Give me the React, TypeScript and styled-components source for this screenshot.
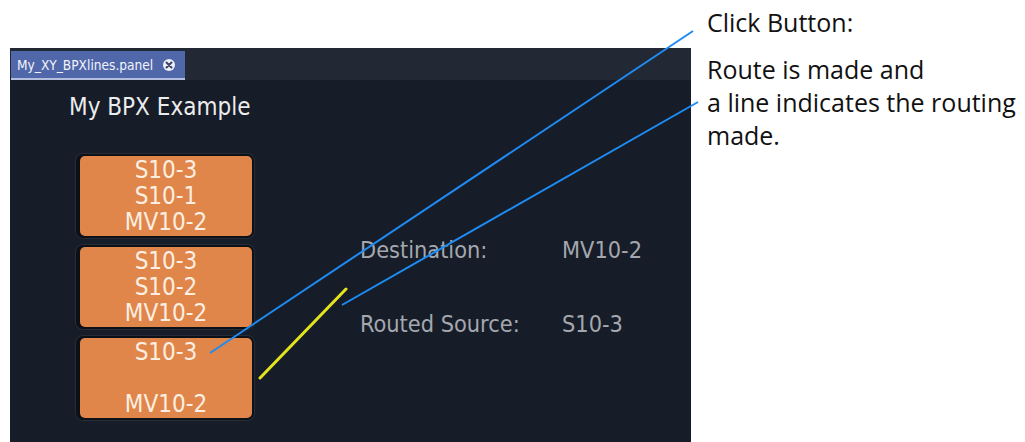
import React from "react";
import styled, { createGlobalStyle } from "styled-components";

const Global = createGlobalStyle`
  html, body { margin: 0; padding: 0; background: #ffffff; }
  body { width: 1025px; height: 442px; overflow: hidden; }
`;

const Page = styled.div`
  position: relative;
  width: 1025px;
  height: 442px;
  display: flex;
  align-items: flex-start;
`;

const Panel = styled.div`
  margin: 48px 0 0 10px;
  width: 681px;
  height: 394px;
  display: flex;
  flex-direction: column;
  background: #161c28;
`;

const TabBar = styled.div`
  height: 32px;
  box-sizing: border-box;
  padding: 3px 0 0 1px;
  background: #222834;
  display: flex;
  align-items: flex-start;
`;

const Tab = styled.div`
  height: 29px;
  box-sizing: border-box;
  padding: 0 10px 0 6px;
  background: #5067aa;
  border-bottom: 2px solid #b4bedf;
  display: flex;
  align-items: center;
  gap: 10px;
  font-family: "DejaVu Sans Condensed", "DejaVu Sans", sans-serif;
  font-stretch: condensed;
  font-size: 13.6px;
  color: #f2f4fa;
  white-space: nowrap;
`;

const CloseDot = styled.span`
  width: 12px;
  height: 12px;
  border-radius: 50%;
  background: #eef0f6;
  display: flex;
  align-items: center;
  justify-content: center;
`;

const Body = styled.div`
  flex: 1;
  display: flex;
  align-items: flex-start;
  font-family: "DejaVu Sans Condensed", "DejaVu Sans", sans-serif;
  font-stretch: condensed;
`;

const LeftCol = styled.div`
  width: 244px;
  display: flex;
  flex-direction: column;
`;

const Title = styled.div`
  margin: 13px 0 0 59px;
  font-size: 24px;
  line-height: 28px;
  color: #ececec;
  white-space: nowrap;
`;

const Stack = styled.div`
  margin: 33px 0 0 66px;
  display: flex;
  flex-direction: column;
  gap: 7px;
`;

const Btn = styled.div`
  width: 178px;
  height: 84px;
  box-sizing: border-box;
  padding: 2px 2px 2px 4px;
  border-radius: 7px;
  background: #0c1017;
  box-shadow: 0 0 0 1px #262c38;
  display: flex;
`;

const BtnFace = styled.div`
  flex: 1;
  border-radius: 5px;
  background: #e0864a;
  display: flex;
  flex-direction: column;
  align-items: center;
  justify-content: center;
  font-size: 24px;
  line-height: 26px;
  color: #fcefe2;
`;

const BtnLine = styled.div`
  height: 26px;
  white-space: nowrap;
`;

const Yellow = styled.svg`
  margin: 207px 0 0 4px;
  flex: none;
`;

const Info = styled.div`
  margin: 157px 0 0 10px;
  display: grid;
  grid-template-columns: 202px auto;
  row-gap: 48px;
  font-size: 23.3px;
  line-height: 26px;
  color: #a4a8ae;
  white-space: nowrap;
`;

const Notes = styled.div`
  margin-left: 16px;
  padding-top: 6px;
  font-family: "Open Sans", sans-serif;
  font-size: 25px;
  line-height: 33px;
  color: #111111;
  white-space: nowrap;
`;

const Para = styled.p<{ $gap?: number }>`
  margin: ${(p) => p.$gap ?? 0}px 0 0 0;
`;

const Overlay = styled.svg`
  position: absolute;
  left: 0;
  top: 0;
  pointer-events: none;
`;

const buttons: string[][] = [
  ["S10-3", "S10-1", "MV10-2"],
  ["S10-3", "S10-2", "MV10-2"],
  ["S10-3", "", "MV10-2"],
];

export default function App() {
  return (
    <>
      <Global />
      <Page>
        <Panel>
          <TabBar>
            <Tab>
              My_XY_BPXlines.panel
              <CloseDot>
                <svg width="8" height="8" viewBox="0 0 8 8">
                  <path d="M1.5 1.5 L6.5 6.5 M6.5 1.5 L1.5 6.5" stroke="#3a4668" strokeWidth="2" strokeLinecap="round" />
                </svg>
              </CloseDot>
            </Tab>
          </TabBar>
          <Body>
            <LeftCol>
              <Title>My BPX Example</Title>
              <Stack>
                {buttons.map((lines, i) => (
                  <Btn key={i}>
                    <BtnFace>
                      {lines.map((l, j) => (
                        <BtnLine key={j}>{l || "\u00a0"}</BtnLine>
                      ))}
                    </BtnFace>
                  </Btn>
                ))}
              </Stack>
            </LeftCol>
            <Yellow width="92" height="95" viewBox="0 0 92 95">
              <line x1="2" y1="91" x2="88" y2="2" stroke="#e4e41c" strokeWidth="3" strokeLinecap="round" />
            </Yellow>
            <Info>
              <span>Destination:</span>
              <span>MV10-2</span>
              <span>Routed Source:</span>
              <span>S10-3</span>
            </Info>
          </Body>
        </Panel>
        <Notes>
          <Para>Click Button:</Para>
          <Para $gap={14}>
            Route is made and
            <br />
            a line indicates the routing
            <br />
            made.
          </Para>
        </Notes>
        <Overlay width="1025" height="442" viewBox="0 0 1025 442">
          <line x1="210" y1="353" x2="693" y2="31" stroke="#1e8cf5" strokeWidth="2" />
          <line x1="342" y1="305" x2="698" y2="102" stroke="#1e8cf5" strokeWidth="2" />
        </Overlay>
      </Page>
    </>
  );
}
